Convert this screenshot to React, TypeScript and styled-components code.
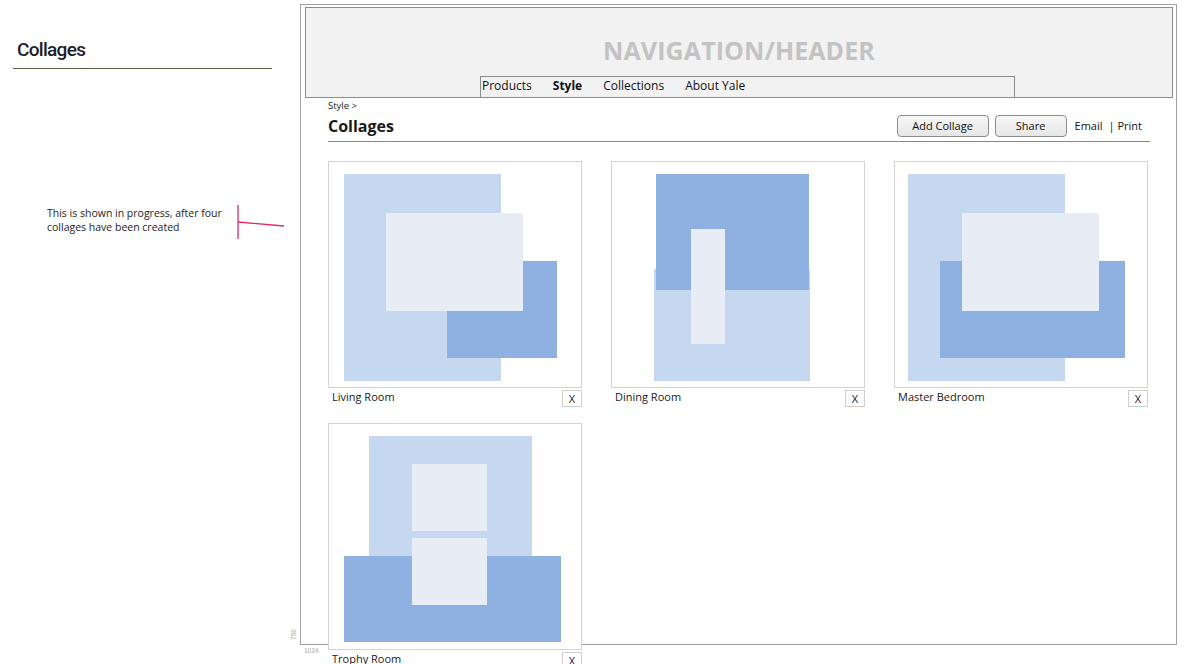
import React from "react";
import styled, { createGlobalStyle } from "styled-components";

const Global = createGlobalStyle`
  html, body { margin: 0; padding: 0; overflow: hidden; background: #fff; }
  body { font-family: "Open Sans", "Noto Sans", sans-serif; color: #1e1e1e; }
  * { box-sizing: border-box; }
`;

const Page = styled.div`
  display: flex;
  align-items: flex-start;
  width: 1183px;
  height: 664px;
`;

const Sidebar = styled.aside`
  width: 300px;
  flex: none;
  padding-top: 37px;
`;

const SideTitle = styled.h1`
  margin: 0 0 0 13px;
  width: 259px;
  padding: 0 0 6px 4px;
  border-bottom: 1px solid #5d5d40;
  font-family: Roboto, "Liberation Sans", sans-serif;
  font-weight: 500;
  font-size: 19px;
  letter-spacing: -0.7px;
  line-height: 25px;
  color: #1d1d2b;
`;

const NoteRow = styled.div`
  display: flex;
  align-items: flex-start;
  margin: 135px 0 0 47px;
`;

const NoteText = styled.p`
  margin: 3px 0 0;
  width: 180px;
  font-size: 10.5px;
  line-height: 13.5px;
  color: #1e1e1e;
`;

const Connector = styled.svg`
  margin-left: 9px;
  flex: none;
`;

const Frame = styled.main`
  position: relative;
  margin-top: 4px;
  width: 877px;
  height: 641px;
  border: 1px solid #a3a3a3;
  display: flex;
  flex-direction: column;
`;

const Header = styled.header`
  flex: none;
  margin: 2px 3px 0 4px;
  height: 91px;
  background: #f2f2f2;
  border: 1px solid #8c8c8c;
  display: flex;
  flex-direction: column;
  align-items: stretch;
  padding-top: 27px;
`;

const HeaderTitle = styled.div`
  text-align: center;
  font-weight: 700;
  font-size: 25px;
  line-height: 30px;
  color: #c3c3c3;
  letter-spacing: 0.1px;
`;

const Nav = styled.nav`
  margin-top: auto;
  margin-left: 174px;
  width: 535px;
  height: 21px;
  border: 1px solid #8c8c8c;
  border-bottom: none;
  display: flex;
  gap: 21px;
  padding-left: 1px;
  font-size: 12px;
  line-height: 18px;
`;

const NavItem = styled.span<{ $active?: boolean }>`
  font-weight: ${(p) => (p.$active ? 700 : 400)};
  color: #111;
`;

const Content = styled.section`
  flex: none;
  padding: 0 26px 0 27px;
  display: flex;
  flex-direction: column;
`;

const Crumb = styled.div`
  margin-top: 2px;
  font-size: 9.5px;
  line-height: 12px;
  color: #222;
`;

const TitleRow = styled.div`
  display: flex;
  align-items: center;
  padding: 3px 8px 4px 0;
  border-bottom: 1px solid #8a8a8a;
`;

const PageTitle = styled.h2`
  margin: 0;
  flex: 1;
  font-size: 16px;
  font-weight: 700;
  line-height: 20px;
  color: #1a1a1a;
`;

const Button = styled.button<{ $w: number }>`
  width: ${(p) => p.$w}px;
  height: 22px;
  margin-left: 6px;
  border: 1px solid #8c8c8c;
  border-radius: 4px;
  background: linear-gradient(#f7f7f7, #e6e6e6);
  font-family: inherit;
  font-size: 11px;
  color: #111;
  padding: 0;
  line-height: 20px;
`;

const TextLink = styled.span<{ $gap: number }>`
  margin-left: ${(p) => p.$gap}px;
  font-size: 11px;
  line-height: 20px;
  color: #111;
`;

const Grid = styled.div`
  margin-top: 19px;
  display: grid;
  grid-template-columns: repeat(3, 254px);
  column-gap: 29px;
  row-gap: 16px;
`;

const Card = styled.div`
  display: flex;
  flex-direction: column;
`;

const Canvas = styled.div`
  position: relative;
  height: 227px;
  border: 1px solid #d4d4d4;
  background: #fff;
`;

const Shape = styled.div<{ $tone: "light" | "dark" | "pale" }>`
  position: absolute;
  background: ${(p) =>
    p.$tone === "light" ? "#c6d8ef" : p.$tone === "dark" ? "#8eb1e2" : "#e8edf5"};
`;

const Caption = styled.div`
  margin-top: 2px;
  height: 17px;
  display: flex;
  justify-content: space-between;
  align-items: flex-start;
  background: #fff;
`;

const Label = styled.span`
  padding-left: 4px;
  font-size: 11px;
  line-height: 14px;
  color: #1a1a1a;
`;

const CloseBox = styled.span`
  width: 20px;
  height: 17px;
  border: 1px solid #cfcfcf;
  display: flex;
  align-items: center;
  justify-content: center;
  font-size: 11px;
  color: #222;
  background: #fff;
`;

const DimLabel = styled.span`
  position: absolute;
  font-family: "Liberation Sans", sans-serif;
  font-size: 6.5px;
  font-weight: 700;
  color: #c4c4c4;
`;

const DimWidth = styled(DimLabel)`
  left: 3px;
  top: calc(100% + 3px);
`;

const DimHeight = styled(DimLabel)`
  left: -13px;
  bottom: 6px;
  transform: rotate(-90deg);
`;

type Rect = [number, number, number, number, "light" | "dark" | "pale"];

const collages: { name: string; rects: Rect[] }[] = [
  {
    name: "Living Room",
    rects: [
      [16, 13, 157, 207, "light"],
      [119, 100, 110, 97, "dark"],
      [58, 52, 137, 98, "pale"],
    ],
  },
  {
    name: "Dining Room",
    rects: [
      [43, 108, 156, 112, "light"],
      [45, 13, 153, 116, "dark"],
      [80, 68, 34, 115, "pale"],
    ],
  },
  {
    name: "Master Bedroom",
    rects: [
      [14, 13, 157, 207, "light"],
      [46, 100, 185, 97, "dark"],
      [68, 52, 137, 98, "pale"],
    ],
  },
  {
    name: "Trophy Room",
    rects: [
      [41, 13, 163, 120, "light"],
      [16, 133, 217, 86, "dark"],
      [84, 41, 75, 67, "pale"],
      [84, 115, 75, 67, "pale"],
    ],
  },
];

export default function App() {
  return (
    <>
      <Global />
      <Page>
        <Sidebar>
          <SideTitle>Collages</SideTitle>
          <NoteRow>
            <NoteText>
              This is shown in progress, after four collages have been created
            </NoteText>
            <Connector width="50" height="36" viewBox="0 0 50 36">
              <line x1="2" y1="1" x2="2" y2="35" stroke="#e0266a" strokeWidth="1.3" />
              <line x1="2" y1="18" x2="48" y2="22" stroke="#e0266a" strokeWidth="1.3" />
            </Connector>
          </NoteRow>
        </Sidebar>
        <Frame>
          <Header>
            <HeaderTitle>NAVIGATION/HEADER</HeaderTitle>
            <Nav>
              <NavItem>Products</NavItem>
              <NavItem $active>Style</NavItem>
              <NavItem>Collections</NavItem>
              <NavItem>About Yale</NavItem>
            </Nav>
          </Header>
          <Content>
            <Crumb>Style &gt;</Crumb>
            <TitleRow>
              <PageTitle>Collages</PageTitle>
              <Button $w={92}>Add Collage</Button>
              <Button $w={72}>Share</Button>
              <TextLink $gap={8}>Email</TextLink>
              <TextLink $gap={6}>| Print</TextLink>
            </TitleRow>
            <Grid>
              {collages.map((c) => (
                <Card key={c.name}>
                  <Canvas>
                    {c.rects.map(([x, y, w, h, tone], i) => (
                      <Shape
                        key={i}
                        $tone={tone}
                        style={{ left: x - 1, top: y - 1, width: w, height: h }}
                      />
                    ))}
                  </Canvas>
                  <Caption>
                    <Label>{c.name}</Label>
                    <CloseBox>X</CloseBox>
                  </Caption>
                </Card>
              ))}
            </Grid>
          </Content>
          <DimHeight>750</DimHeight>
          <DimWidth>1024</DimWidth>
        </Frame>
      </Page>
    </>
  );
}
